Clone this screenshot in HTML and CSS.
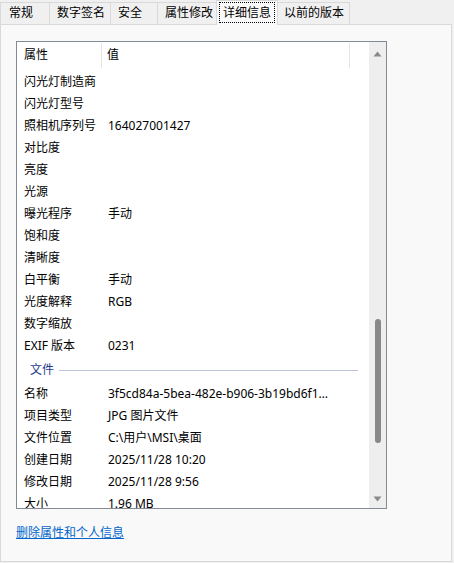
FILE: index.html
```html
<!DOCTYPE html>
<html lang="zh-CN">
<head>
<meta charset="utf-8">
<link rel="stylesheet" href="styles.css">
</head>
<body>
<div class="window">
  <div class="tabs">
    <div class="tab">常规</div>
    <div class="tab">数字签名</div>
    <div class="tab">安全</div>
    <div class="tab">属性修改</div>
    <div class="tab selected"><span class="focus">详细信息</span></div>
    <div class="tab">以前的版本</div>
  </div>
  <div class="panel">
    <div class="listbox">
      <div class="list">
        <div class="header">
          <div class="hcell c1">属性</div>
          <div class="hcell c2">值</div>
          <div class="hcell c3"></div>
        </div>
        <div class="rows">
          <div class="row"><span class="k">闪光灯制造商</span><span class="v"></span></div>
          <div class="row"><span class="k">闪光灯型号</span><span class="v"></span></div>
          <div class="row"><span class="k">照相机序列号</span><span class="v">164027001427</span></div>
          <div class="row"><span class="k">对比度</span><span class="v"></span></div>
          <div class="row"><span class="k">亮度</span><span class="v"></span></div>
          <div class="row"><span class="k">光源</span><span class="v"></span></div>
          <div class="row"><span class="k">曝光程序</span><span class="v">手动</span></div>
          <div class="row"><span class="k">饱和度</span><span class="v"></span></div>
          <div class="row"><span class="k">清晰度</span><span class="v"></span></div>
          <div class="row"><span class="k">白平衡</span><span class="v">手动</span></div>
          <div class="row"><span class="k">光度解释</span><span class="v">RGB</span></div>
          <div class="row"><span class="k">数字缩放</span><span class="v"></span></div>
          <div class="row"><span class="k">EXIF 版本</span><span class="v">0231</span></div>
          <div class="group"><span class="gtitle">文件</span><span class="gline"></span></div>
          <div class="row"><span class="k">名称</span><span class="v">3f5cd84a-5bea-482e-b906-3b19bd6f1…</span></div>
          <div class="row"><span class="k">项目类型</span><span class="v">JPG 图片文件</span></div>
          <div class="row"><span class="k">文件位置</span><span class="v">C:\用户\MSI\桌面</span></div>
          <div class="row"><span class="k">创建日期</span><span class="v">2025/11/28 10:20</span></div>
          <div class="row"><span class="k">修改日期</span><span class="v">2025/11/28 9:56</span></div>
          <div class="row"><span class="k">大小</span><span class="v">1.96 MB</span></div>
        </div>
      </div>
      <div class="scrollbar">
        <svg class="arrow" width="9" height="6" viewBox="0 0 9 6"><path d="M4.5 0.5 L8.5 5.5 L0.5 5.5 Z" fill="#8a8a8a"/></svg>
        <div class="thumb"></div>
        <div class="spacer"></div>
        <svg class="arrow" width="9" height="6" viewBox="0 0 9 6"><path d="M0.5 0.5 L8.5 0.5 L4.5 5.5 Z" fill="#8a8a8a"/></svg>
      </div>
    </div>
    <a class="link" href="#">删除属性和个人信息</a>
  </div>
</div>
</body>
</html>
```

FILE: styles.css
```css
* { box-sizing: border-box; }
html, body {
  margin: 0;
  padding: 0;
  background: #f0f0f0;
}
body {
  font-family: "Noto Sans", "Noto Sans CJK SC", sans-serif;
  font-size: 12px;
  color: #000;
  width: 454px;
  height: 563px;
}
.window {
  display: flex;
  flex-direction: column;
  width: 452px;
}
.tabs {
  display: flex;
  height: 24px;
  align-items: flex-end;
  position: relative;
  z-index: 1;
}
.tab {
  height: 22px;
  line-height: 20px;
  padding: 0 5px 0 7px;
  min-width: 48px;
  background: #f0f0f0;
  border: 1px solid #d9d9d9;
  border-bottom: none;
  margin-right: -1px;
  white-space: nowrap;
}
.tab:first-child { padding-left: 8px; width: 50px; }
.tab.selected {
  height: 25px;
  margin: 0 -2px -1px -2px;
  padding: 1px 2px 0 2px;
  background: #f9f9f9;
  position: relative;
  z-index: 2;
  line-height: 20px;
}
.focus {
  display: block;
  border: 1px dotted #000;
  padding: 0 3px;
  height: 21px;
  line-height: 19px;
}
.panel {
  height: 538px;
  background: #f9f9f9;
  border: 1px solid #d9d9d9;
  padding: 16px 0 0 15px;
  display: flex;
  flex-direction: column;
  align-items: flex-start;
}
.listbox {
  width: 371px;
  height: 468px;
  border: 1px solid #838a94;
  background: #fff;
  display: flex;
}
.list {
  width: 352px;
  height: 466px;
  overflow: hidden;
}
.header {
  display: flex;
  height: 29px;
  align-items: flex-start;
}
.hcell {
  height: 25px;
  line-height: 23px;
  margin-top: 1px;
}
.c1 { width: 85px; padding-left: 7px; border-right: 1px solid #e5e5e5; }
.c2 { width: 248px; padding-left: 5px; border-right: 1px solid #e5e5e5; }
.row {
  display: flex;
  height: 22px;
  line-height: 22px;
  white-space: nowrap;
}
.k { width: 85px; padding-left: 7px; flex: none; }
.v { padding-left: 6px; flex: none; }
.group {
  display: flex;
  align-items: center;
  height: 26px;
  padding: 0 11px 0 13px;
}
.gtitle {
  color: #1e3a8c;
  line-height: 26px;
  margin-right: 5px;
}
.gline {
  flex: 1;
  height: 1px;
  background: #bac4dc;
}
.scrollbar {
  width: 17px;
  background: #eeeeee;
  display: flex;
  flex-direction: column;
  align-items: center;
  padding: 9px 0 6px 0;
}
.arrow { display: block; flex: none; }
.thumb {
  width: 6px;
  height: 124px;
  border-radius: 3px;
  background: #888888;
  margin-top: 262px;
}
.spacer { flex: 1; }
.link {
  margin-top: 15px;
  margin-left: 0;
  color: #0066cc;
  text-decoration: underline;
  line-height: 17px;
}
```
